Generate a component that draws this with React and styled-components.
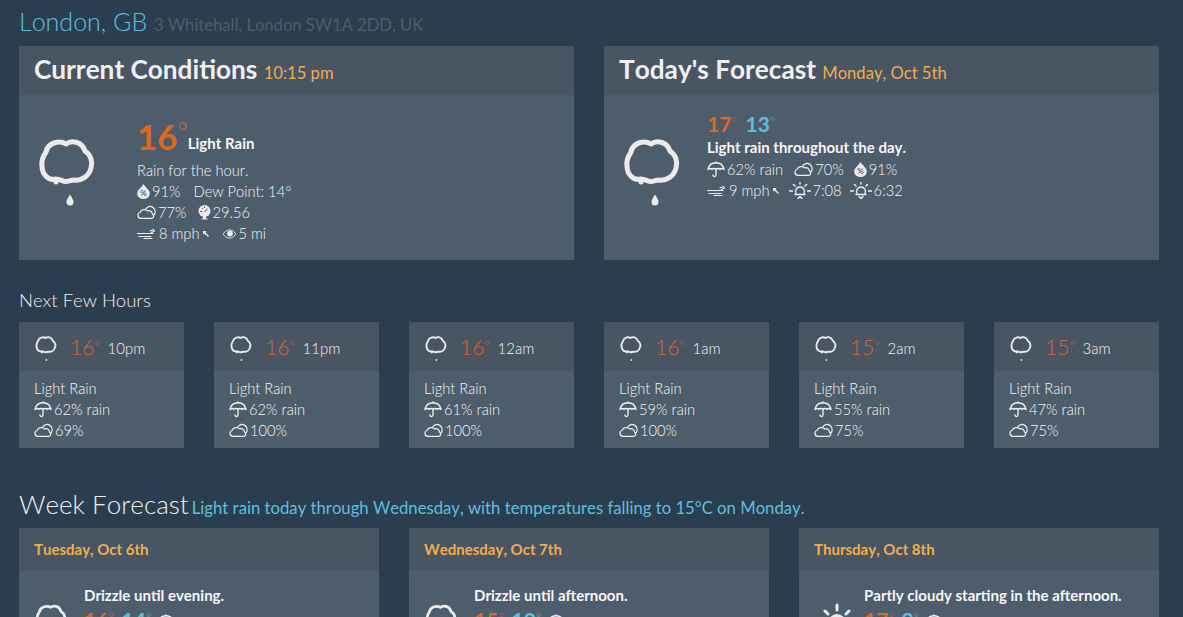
import React from "react";
import styled, { createGlobalStyle } from "styled-components";

const Global = createGlobalStyle`
  html, body { margin: 0; height: 617px; overflow: hidden; background: #2b3e50; }
  body { font-family: Lato, "Noto Sans", sans-serif; font-weight: 300; font-size: 15px; line-height: 21px; color: #f6f6f6; font-kerning: none; }
`;

const Page = styled.div`width: 1140px; margin-left: 19px; height: 617px; overflow: hidden;`;
const Title = styled.h3`margin: 0; padding-top: 6px; height: 46px; box-sizing: border-box; font-weight: 300; font-size: 25px; line-height: 30px; color: #5bc0de; white-space: nowrap;`;
const Muted = styled.small`font-size: 16.600px; color: #4e5d6c; font-weight: 400;`;
const Two = styled.div`display: grid; grid-template-columns: repeat(2, 555px); gap: 30px;`;
const Six = styled.div`display: grid; grid-template-columns: repeat(6, 165px); gap: 30px;`;
const Three = styled.div`display: grid; grid-template-columns: repeat(3, 360px); gap: 30px;`;
const Panel = styled.section`background: #4e5d6c;`;
const Head = styled.header`background: #485563; height: ${p => p.$h}px; box-sizing: border-box; padding: ${p => p.$pt || 0}px 15px 0; display: flex; align-items: center; white-space: nowrap;`;
const HeadTitle = styled.h2`margin: 0; font-size: 26.200px; font-weight: 700; line-height: 30px; color: #f0f0f0;`;
const Stamp = styled.small`font-size: 16.600px; font-weight: 400; color: #f0ad4e;`;
const MainBody = styled.div`height: 165px; box-sizing: border-box; padding: ${p => p.$pt}px 15px 0; display: grid; grid-template-columns: ${p => p.$col}px 1fr;`;
const BigIcon = styled.div`padding: ${p => p.$pt}px 0 0 4px;`;
const Line = styled.div`display: flex; align-items: center; height: 21px; font-size: 14.700px; white-space: nowrap;`;
const SpacedLine = styled(Line)`margin-top: ${p => p.$mt || 0}px;`;
const Pair = styled.span`display: inline-flex; align-items: center; gap: 2px; margin-right: ${p => p.$mr || 0}px;`;
const Temp = styled.span`color: #df691a; font-size: 35px; line-height: 36px; font-weight: 700;`;
const TempRow = styled.div`display: flex; align-items: flex-end; height: 43px; box-sizing: border-box; padding-bottom: 5px; gap: 0;`;
const Bold = styled.strong`font-weight: 700; font-size: 15px;`;
const Daily = styled.div`display: flex; gap: 9px; height: 28px; align-items: center; font-size: 21px; font-weight: 700;`;
const Hi = styled.span`color: #df691a;`;
const Lo = styled.span`color: #5bc0de;`;
const SectionTitle = styled.h4`margin: 0; font-size: 18.500px; font-weight: 300; line-height: 21px; color: #f0f0f0; padding: 30px 0 11px;`;
const HourHead = styled.header`background: #485563; height: 49px; box-sizing: border-box; padding: 0 15px; display: flex; align-items: center;`;
const HourIcon = styled.span`display: block; margin: 5px 0 0 1px; line-height: 0;`;
const HourTemp = styled.span`color: #d9622f; font-size: 21px; margin: 0 8px 0 13px;`;
const HourTime = styled.span`font-size: 15px; font-weight: 300; margin-top: 3px;`;
const HourBody = styled.div`padding: 7px 15px 7px;`;
const WeekTitle = styled.h3`margin: 0; padding: 43px 0 6px; font-size: 26px; line-height: 27px; font-weight: 300; color: #f0f0f0; white-space: nowrap;`;
const WeekSummary = styled.small`font-size: 16.700px; font-weight: 400; color: #5bc0de; margin-left: -4px;`;
const DayName = styled.span`font-size: 15px; font-weight: 700; color: #f0ad4e;`;
const DayBody = styled.div`padding: 15px 15px 0; display: grid; grid-template-columns: 50px 1fr; height: 170px; box-sizing: border-box;`;
const DayIcon = styled.div`padding: 18px 0 0 ${p => p.$pl}px;`;
const Desc = styled.div`font-size: 15px; font-weight: 700; line-height: 21px; white-space: nowrap;`;
const WeekTemps = styled.div`display: flex; gap: 8px; align-items: center; font-size: 21px; font-weight: 700; height: 26px; svg { margin: 6px 0 0 -2px; }`;

const Deg = styled.span`font-size: ${p => p.$s || "60%"}; font-weight: 300; line-height: 0; position: relative; top: ${p => p.$t || "-0.4em"};`;

const Svg = ({ w = 18, h = 18, vb = "0 0 24 24", sw = 1.4, children }) => (
  <svg width={w} height={h} viewBox={vb} fill="none" stroke="#f0f0f0" strokeWidth={sw} strokeLinecap="round" strokeLinejoin="round">{children}</svg>
);

const RainCloud = ({ width = 58, sw = 5, big = true }) => (
  <svg width={width} height={(width * 72) / 58} viewBox="0 0 58 72" fill="none" stroke="#ebebeb" strokeWidth={sw} strokeLinecap="round" strokeLinejoin="round">
    <path d="M28 8C33 4 44 5 47 15C53 19 55 26 53 32C51 40 44 45 36 44C32 44 30 46 27 45.500C24 45 22 43 18 43C10 45 4 38 4 30C3 24 6 19 8 16C10 6 22 4 28 8Z" />
    <circle cx="18" cy="46" r="2.500" fill="#ebebeb" stroke="none" />
    {big
      ? <path d="M32 58.500c-2 3.500-3.500 5-3.500 7.500a3.500 3.500 0 0 0 7 0c0-2.500-1.500-4-3.500-7.500z" fill="#ebebeb" stroke="none" />
      : <circle cx="30" cy="66" r="2.500" fill="#ebebeb" stroke="none" />}
  </svg>
);
const Umbrella = () => (
  <Svg w={18} h={17} vb="0 0 20 19" sw={1.5}>
    <path d="M1 9.500C2 4.500 5.500 2 10 2s8 2.500 9 7.500c-1.500-1.500-3.500-1.500-4.500 0-1-1.500-3.500-1.500-4.500 0-1-1.500-3.500-1.500-4.500 0C4.500 8 2.500 8 1 9.500z" />
    <path d="M10 1v1M10 9.500V15.500c0 2.500-3.500 2.500-3.500 0" />
  </Svg>
);
const Cloudy = () => (
  <Svg w={19} h={15} vb="0 0 24 19" sw={1.6}>
    <path d="M6 17H5a4 4 0 0 1-1-7.800C5 5.500 11 4.500 13.500 7.500c3-1 6 1 6 4 2.500 1 2 5.500-1.500 5.500z" />
    <path d="M11 5c2-3.500 6-4 9-2 3 2 3.500 6 2 9" />
  </Svg>
);
const Humidity = () => (
  <svg width="13" height="15" viewBox="0 0 13 15">
    <path d="M6.500 0C4 4 .2 6 .2 9.500a6.300 5.500 0 0 0 12.600 0C12.800 6 9 4 6.500 0z" fill="#ebebeb" />
    <path d="M4.500 11.500l4-5" stroke="#4e5d6c" strokeWidth="1" />
    <circle cx="4.800" cy="7.500" r="1.200" fill="none" stroke="#4e5d6c" strokeWidth=".8" />
    <circle cx="8.200" cy="10.500" r="1.200" fill="none" stroke="#4e5d6c" strokeWidth=".8" />
  </svg>
);
const Barometer = () => (
  <svg width="13" height="15" viewBox="0 0 13 15">
    <circle cx="6.500" cy="6" r="6" fill="#ebebeb" />
    <path d="M6.500 7l3-3.500M2 6.500h2M4 3l1 1M6.500 1.500v1.500" stroke="#4e5d6c" strokeWidth="1" />
    <path d="M5 11h3v2.500h1.500v1h-6v-1H5z" fill="#ebebeb" />
  </svg>
);
const Wind = () => (
  <Svg w={20} h={12} vb="0 0 20 12" sw={1.1}>
    <path d="M.5 5.500h15.500M13 3l3.500-1.500 1 1.500-3 1.500M2 8.500h12M7 10.500h8" />
  </Svg>
);
const Bearing = () => (
  <svg width="6" height="6" viewBox="0 0 7 7" style={{ marginLeft: 1 }}>
    <path d="M0 0h4L3 1.500 7 6 6 7 1.500 3 0 4z" fill="#ebebeb" />
  </svg>
);
const Eye = () => (
  <svg width="15" height="10" viewBox="0 0 15 11">
    <path d="M.5 5.500C3 2 5 1 7.500 1s4.500 1 7 4.500C12 9 10 10 7.500 10S3 9 .5 5.500z" fill="none" stroke="#ebebeb" />
    <circle cx="8" cy="5" r="3.200" fill="#ebebeb" />
  </svg>
);
const Sun = ({ down }) => (
  <Svg w={22} h={17} vb="0 0 22 17" sw={1.4}>
    <path d="M7 11.500a4.500 4.500 0 1 1 8 0" />
    <path d="M6 12.500h10M.500 9h3M18.500 9h3M4.500 2.500l1.500 1.500M17.500 2.500L16 4M11 .5v1.500" />
    <path d={down ? "M9 14.500l2 2 2-2" : "M9 16.500l2-2 2 2"} />
  </Svg>
);
const PartSun = () => (
  <svg width="32" height="40" viewBox="0 0 32 40" fill="none" stroke="#ebebeb" strokeWidth="3" strokeLinecap="round">
    <circle cx="16" cy="20" r="7.500" />
    <path d="M16 2v5M4 8l3 3M28 8l-3 3M1 20h3M28 20h3" />
  </svg>
);

const hours = [
  ["16", "10pm", "62", "69"], ["16", "11pm", "62", "100"], ["16", "12am", "61", "100"],
  ["16", "1am", "59", "100"], ["15", "2am", "55", "75"], ["15", "3am", "47", "75"],
];
const days = [
  ["Tuesday, Oct 6th", "Drizzle until evening.", "16", "14", false],
  ["Wednesday, Oct 7th", "Drizzle until afternoon.", "15", "10", false],
  ["Thursday, Oct 8th", "Partly cloudy starting in the afternoon.", "17", "9", true],
];

export default function App() {
  return (
    <Page>
      <Global />
      <Title>London, GB <Muted>3 Whitehall, London SW1A 2DD, UK</Muted></Title>
      <Two>
        <Panel>
          <Head $h={49} $pt={1}><HeadTitle>Current Conditions <Stamp>10:15 pm</Stamp></HeadTitle></Head>
          <MainBody $pt={21} $col={103}>
            <BigIcon $pt={20}><RainCloud /></BigIcon>
            <div>
              <TempRow><Temp>16<Deg $s="70%" $t="-0.35em">°</Deg></Temp><Bold>Light Rain</Bold></TempRow>
              <SpacedLine $mt={1}>Rain for the hour.</SpacedLine>
              <Line><Pair $mr={13}><Humidity />91%</Pair>Dew Point: 14°</Line>
              <Line><Pair $mr={11}><Cloudy />77%</Pair><Pair><Barometer />29.56</Pair></Line>
              <Line><Pair $mr={13}><Wind />8 mph<Bearing /></Pair><Pair><Eye />5 mi</Pair></Line>
            </div>
          </MainBody>
        </Panel>
        <Panel>
          <Head $h={49} $pt={1}><HeadTitle>Today's Forecast <Stamp>Monday, Oct 5th</Stamp></HeadTitle></Head>
          <MainBody $pt={14} $col={88}>
            <BigIcon $pt={27}><RainCloud /></BigIcon>
            <div>
              <Daily><Hi>17<Deg>°</Deg></Hi><Lo>13<Deg>°</Deg></Lo></Daily>
              <Desc>Light rain throughout the day.</Desc>
              <SpacedLine $mt={1}><Pair $mr={11}><Umbrella />62% rain</Pair><Pair $mr={10}><Cloudy />70%</Pair><Pair><Humidity />91%</Pair></SpacedLine>
              <Line><Pair $mr={10}><Wind />9 mph<Bearing /></Pair><Pair $mr={8}><Sun />7:08</Pair><Pair><Sun down />6:32</Pair></Line>
            </div>
          </MainBody>
        </Panel>
      </Two>
      <SectionTitle>Next Few Hours</SectionTitle>
      <Six>
        {hours.map(h => (
          <Panel key={h[1]}>
            <HourHead>
              <HourIcon><RainCloud width={22} big={false} /></HourIcon>
              <HourTemp>{h[0]}<Deg>°</Deg></HourTemp>
              <HourTime>{h[1]}</HourTime>
            </HourHead>
            <HourBody>
              <Line>Light Rain</Line>
              <Line><Pair><Umbrella />{h[2]}% rain</Pair></Line>
              <Line><Pair><Cloudy />{h[3]}%</Pair></Line>
            </HourBody>
          </Panel>
        ))}
      </Six>
      <WeekTitle>Week Forecast <WeekSummary>Light rain today through Wednesday, with temperatures falling to 15°C on Monday.</WeekSummary></WeekTitle>
      <Three>
        {days.map(d => (
          <Panel key={d[0]}>
            <Head $h={42}><DayName>{d[0]}</DayName></Head>
            <DayBody>
              <DayIcon $pl={d[4] ? 7 : 1}>{d[4] ? <PartSun /> : <RainCloud width={32} />}</DayIcon>
              <div>
                <Desc>{d[1]}</Desc>
                <WeekTemps><Hi>{d[2]}<Deg>°</Deg></Hi><Lo>{d[3]}<Deg>°</Deg></Lo><Umbrella /></WeekTemps>
              </div>
            </DayBody>
          </Panel>
        ))}
      </Three>
    </Page>
  );
}
